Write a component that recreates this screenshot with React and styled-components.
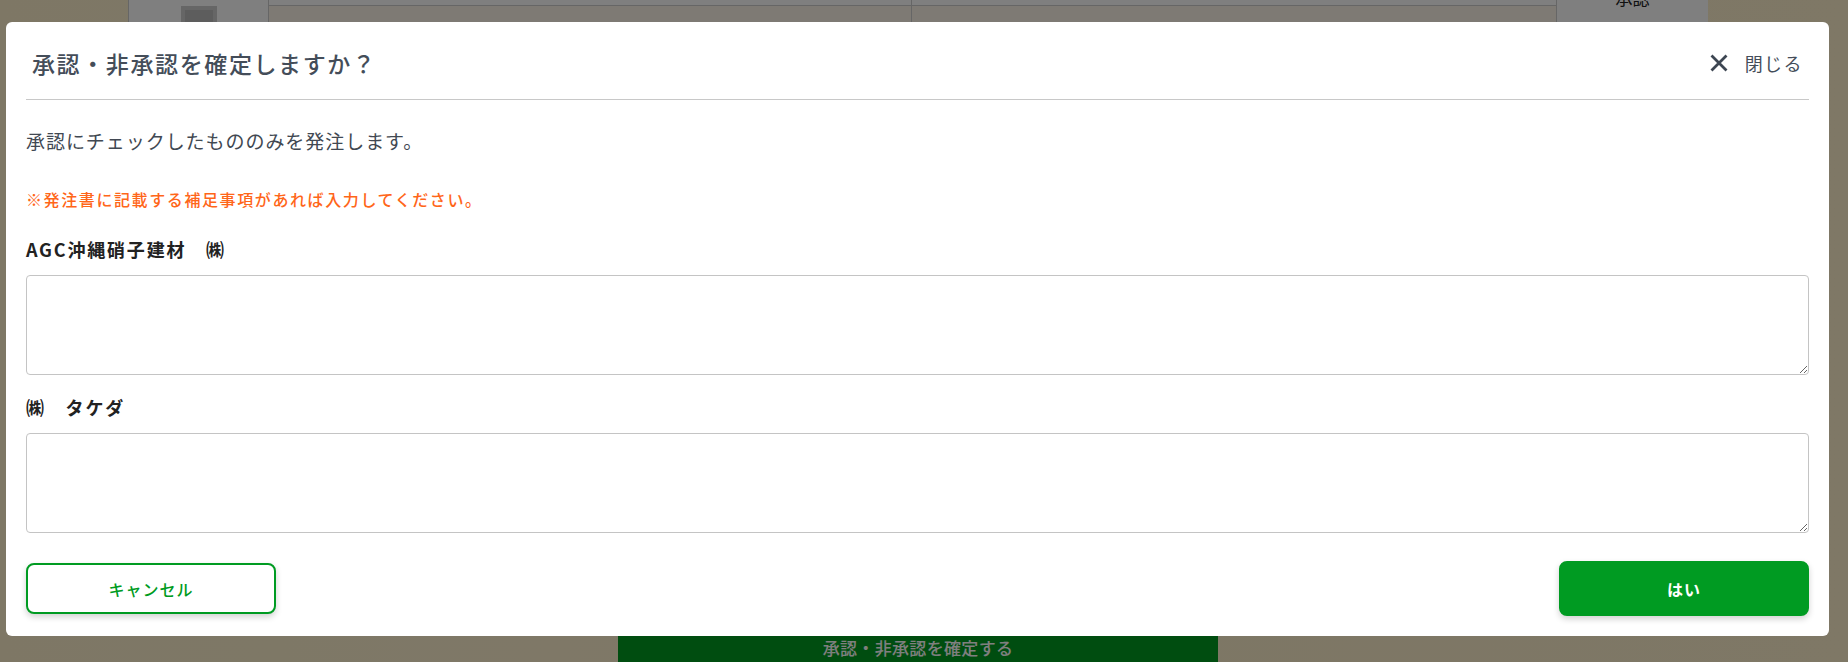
import React from 'react';
import styled, { createGlobalStyle } from 'styled-components';

const GlobalStyle = createGlobalStyle`
  html, body {
    margin: 0;
    padding: 0;
  }
  body {
    font-family: "Noto Sans CJK JP", "Noto Sans", sans-serif;
  }
  * {
    box-sizing: border-box;
  }
`;

const Page = styled.div`
  position: relative;
  width: 1848px;
  height: 662px;
  overflow: hidden;
  background: linear-gradient(90deg, #fcefcb 0%, #fef1cf 30%, #fbeecb 60%, #fef0cc 100%);
`;

const BackTable = styled.div`
  display: grid;
  grid-template-columns: 140px 643px 645px 151px;
  grid-template-rows: 20px 40px;
  margin: -14px 0 0 128px;
  width: 1579px;
  border-left: 1px solid #ccc;
  border-right: 1px solid #ccc;
`;

const BackCell = styled.div`
  grid-column: ${(p) => p.col};
  grid-row: ${(p) => p.row};
  background: ${(p) => (p.cream ? '#fcf4e8' : '#ffffff')};
  border-right: ${(p) => (p.col === 4 ? 'none' : '1px solid #ccc')};
  border-bottom: 1px solid #ccc;
  display: flex;
  justify-content: center;
  padding-top: ${(p) => p.pad || 0}px;
  font-size: 17px;
  color: #222;
  line-height: 24px;
`;

const PhotoIcon = styled.div`
  width: 36px;
  height: 36px;
  border: 4px solid #ccc;
  background: #bbb;
`;

const BackButton = styled.div`
  position: absolute;
  left: 618px;
  bottom: 0;
  width: 600px;
  height: 52px;
  background: #009b20;
  color: #fff;
  font-size: 17px;
  font-weight: 500;
  display: flex;
  align-items: flex-end;
  justify-content: center;
  padding-bottom: 2px;
  letter-spacing: 0.02em;
`;

const Overlay = styled.div`
  position: absolute;
  inset: 0;
  background: rgba(0, 0, 0, 0.5);
  padding: 22px 0 0 6px;
`;

const Modal = styled.div`
  width: 1823px;
  background: #fff;
  border-radius: 6px;
  padding: 0 20px 20px;
  display: flex;
  flex-direction: column;
`;

const Header = styled.div`
  display: flex;
  align-items: center;
  justify-content: space-between;
  height: 78px;
  padding-top: 4px;
  border-bottom: 1px solid #c8c8c8;
`;

const Title = styled.h2`
  margin: 0 0 0 6px;
  font-size: 23px;
  font-weight: 500;
  color: #444d59;
  letter-spacing: 0.07em;
`;

const CloseButton = styled.button`
  display: flex;
  align-items: center;
  gap: 16px;
  margin-right: 6px;
  padding: 0;
  border: none;
  background: none;
  font-family: inherit;
  font-size: 18px;
  color: #444d59;
  letter-spacing: 0.08em;
  cursor: pointer;
`;

const Lead = styled.p`
  margin: 27px 0 0;
  font-size: 19px;
  line-height: 28px;
  color: #414852;
  letter-spacing: 0.05em;
`;

const Note = styled.p`
  margin: 32px 0 0;
  font-size: 16px;
  line-height: 24px;
  font-weight: 500;
  color: #ff6619;
  letter-spacing: 0.1em;
`;

const Label = styled.label`
  display: block;
  margin-top: ${(p) => p.gap}px;
  font-size: 18px;
  line-height: 28px;
  font-weight: 700;
  color: #222;
  letter-spacing: 0.1em;
`;

const Memo = styled.textarea`
  display: block;
  width: 100%;
  height: 100px;
  margin-top: 12px;
  border: 1px solid #c4c4c4;
  border-radius: 4px;
  font-family: inherit;
  font-size: 16px;
  padding: 8px;
`;

const Footer = styled.div`
  display: flex;
  align-items: center;
  justify-content: space-between;
  margin-top: 28px;
`;

const ActionButton = styled.button`
  width: 250px;
  height: ${(p) => (p.primary ? 55 : 51)}px;
  border-radius: 8px;
  border: 2px solid #009b22;
  background: ${(p) => (p.primary ? '#009b22' : '#fff')};
  color: ${(p) => (p.primary ? '#fff' : '#009b22')};
  font-family: inherit;
  font-size: 16px;
  font-weight: ${(p) => (p.primary ? 700 : 500)};
  letter-spacing: 0.06em;
  box-shadow: 0 3px 6px rgba(0, 0, 0, 0.18);
  cursor: pointer;
`;

const companies = [
  { id: 'agc', name: 'AGC沖縄硝子建材　㈱', gap: 24 },
  { id: 'takeda', name: '㈱　タケダ', gap: 18 },
];

export default function App() {
  return (
    <Page>
      <GlobalStyle />
      <BackTable>
        <BackCell col={1} row="1 / span 2" pad={20}>
          <PhotoIcon />
        </BackCell>
        <BackCell col={2} row={1} />
        <BackCell col={3} row={1} />
        <BackCell col={4} row="1 / span 2">
          承認
        </BackCell>
        <BackCell col={2} row={2} cream />
        <BackCell col={3} row={2} cream />
      </BackTable>
      <BackButton>承認・非承認を確定する</BackButton>

      <Overlay>
        <Modal>
          <Header>
            <Title>承認・非承認を確定しますか？</Title>
            <CloseButton type="button">
              <svg width="20" height="20" viewBox="0 0 20 20">
                <path
                  d="M2.5 2.5L17.5 17.5M17.5 2.5L2.5 17.5"
                  stroke="#3d4652"
                  strokeWidth="2.8"
                  fill="none"
                />
              </svg>
              閉じる
            </CloseButton>
          </Header>

          <Lead>承認にチェックしたもののみを発注します。</Lead>
          <Note>※発注書に記載する補足事項があれば入力してください。</Note>

          {companies.map((c) => (
            <React.Fragment key={c.id}>
              <Label htmlFor={c.id} gap={c.gap}>
                {c.name}
              </Label>
              <Memo id={c.id} />
            </React.Fragment>
          ))}

          <Footer>
            <ActionButton type="button">キャンセル</ActionButton>
            <ActionButton type="button" primary>
              はい
            </ActionButton>
          </Footer>
        </Modal>
      </Overlay>
    </Page>
  );
}
